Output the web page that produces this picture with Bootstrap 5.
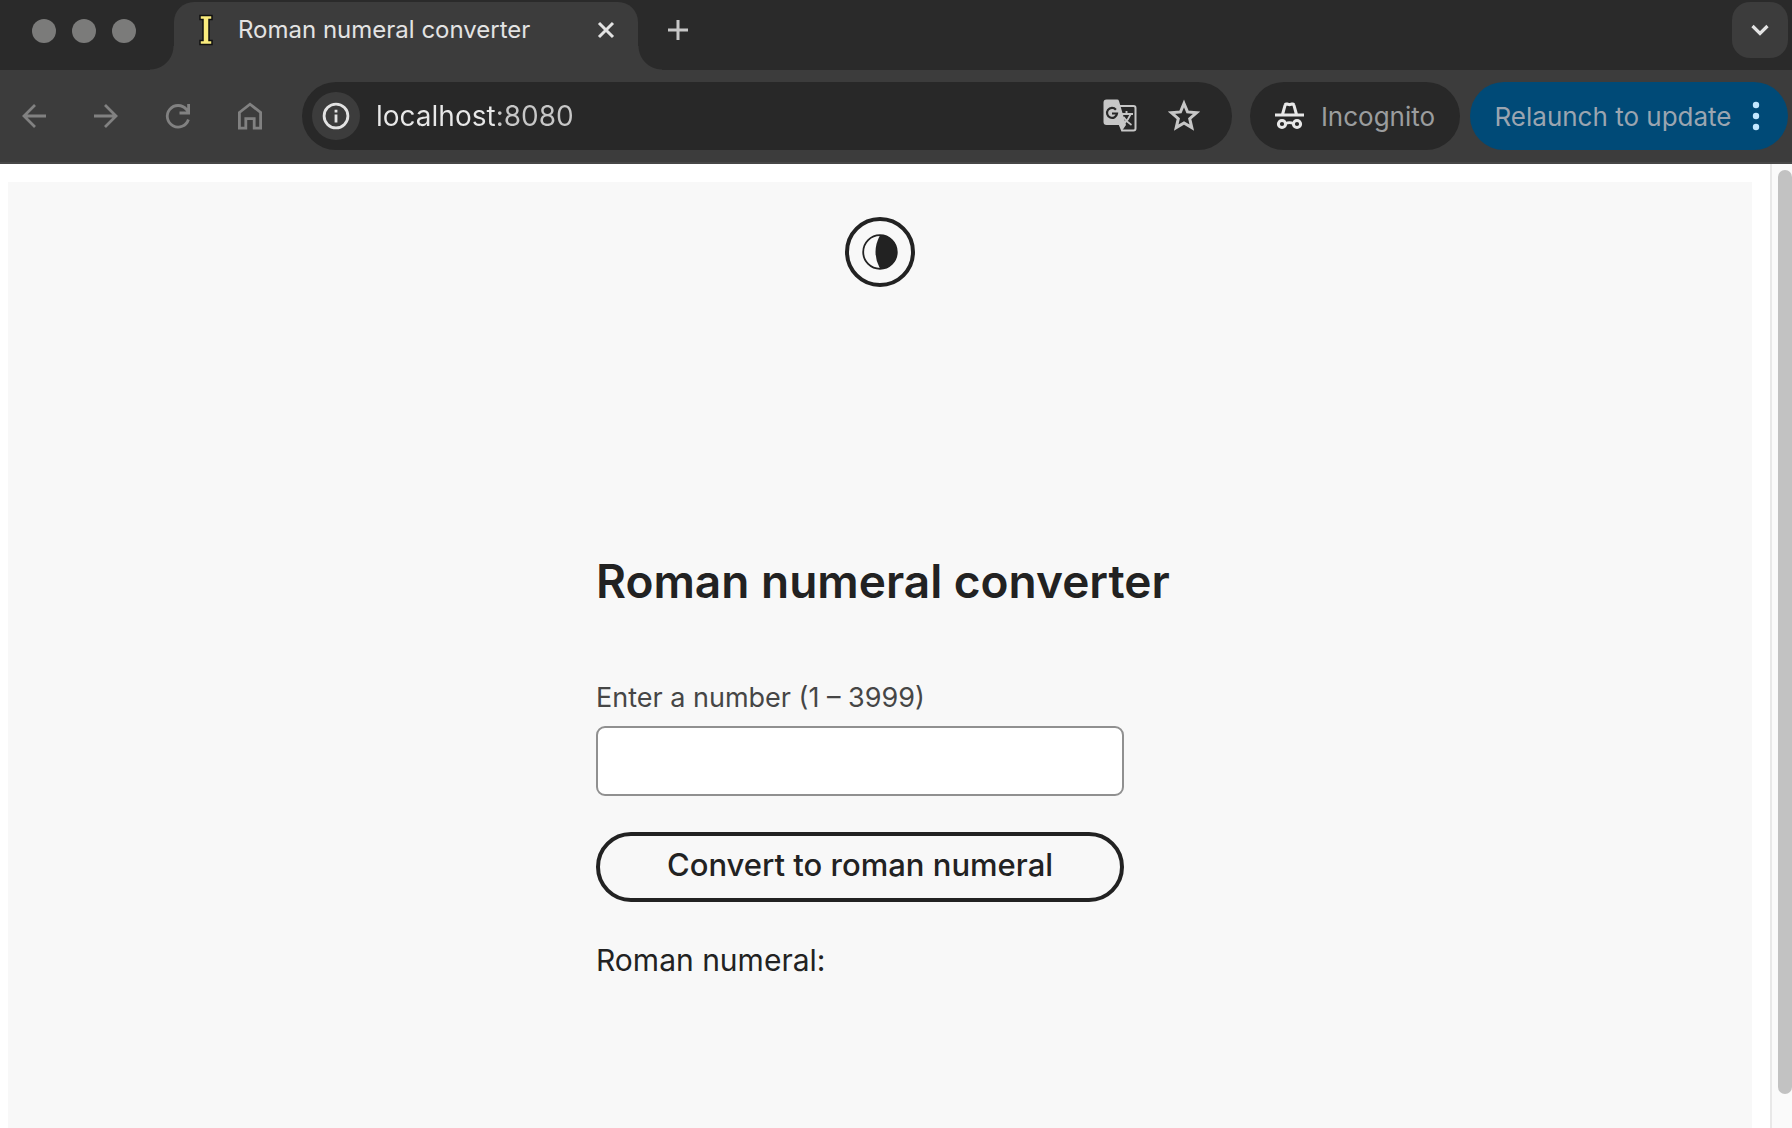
<!DOCTYPE html>
<html lang="en">
<head>
<meta charset="utf-8">
<meta name="viewport" content="width=device-width, initial-scale=1">
<title>Roman numeral converter</title>
<link href="https://cdn.jsdelivr.net/npm/bootstrap@5.3.0/dist/css/bootstrap.min.css" rel="stylesheet">
<style>
  body { font-family: Inter, "Liberation Sans", sans-serif; background: #fff; color: #222; }
  svg { display: block; flex: none; }
  .strip { background: #2a2a2a; height: 70px; padding-right: 4px; }
  .lights { padding-left: 32px; width: 174px; padding-top: 19px; gap: 16px; }
  .light { width: 24px; height: 24px; border-radius: 50%; background: #7b7b7a; }
  .tab-active { position: relative; width: 464px; height: 68px; margin-top: 2px; background: #3c3c3c; border-radius: 20px 20px 0 0; color: #e3e3e3; font-size: 24px; line-height: 32px; padding: 12px 17px 0 22px; gap: 22px; }
  .tab-active::before, .tab-active::after { content: ""; position: absolute; bottom: 0; width: 24px; height: 24px; }
  .tab-active::before { right: 100%; background: radial-gradient(circle at 0 0, transparent 23px, #3c3c3c 24px); }
  .tab-active::after { left: 100%; background: radial-gradient(circle at 100% 0, transparent 23px, #3c3c3c 24px); }
  .plain { border: 0; background: none; padding: 0; display: flex; align-items: center; justify-content: center; }
  .new-tab { width: 32px; height: 32px; margin: 14px 0 0 24px; color: #c7c7c7; }
  .tab-search { width: 56px; height: 56px; margin-top: 2px; border-radius: 18px; background: #3c3c3c; color: #e3e3e3; }
  .toolbar { background: #3c3c3c; height: 94px; border-bottom: 2px solid #474747; padding: 0 4px 0 10px; }
  .nav-btn { width: 48px; height: 48px; color: #818181; }
  .omnibox { height: 68px; margin: 0 18px 0 28px; border-radius: 34px; background: #282828; padding: 0 30px 0 10px; }
  .site-info { width: 48px; height: 48px; border-radius: 50%; background: #3c3c3c; color: #e3e3e3; }
  .address { min-width: 0; border: 0; outline: 0; padding: 0; margin-left: 16px; font-size: 28px; line-height: 40px; color: transparent; background: linear-gradient(90deg, #e8e8e8 120px, #c7c7c7 120px); -webkit-background-clip: text; background-clip: text; }
  .omni-icon { width: 36px; height: 36px; color: #c7c7c7; }
  .pill { height: 68px; border-radius: 34px; font-size: 26px; line-height: 32px; white-space: nowrap; }
  .pill span { padding-top: 2px; }
  .incognito { width: 210px; background: #282828; color: #9b9d9e; margin-right: 10px; gap: 17px; }
  .relaunch { width: 318px; background: #004a77; color: #9ba5b0; padding-right: 4px; gap: 20px; }
  .panel { background: #f8f8f8; margin: 18px 18px 0 8px; padding-top: 35px; }
  .theme-toggle { width: 70px; height: 70px; border: 4px solid #222; border-radius: 50%; }
  .converter { width: 568px; max-width: 100%; margin-top: 266px; }
  .converter h1 { font-size: 46px; line-height: 56px; font-weight: 600; margin: 0 0 73px; white-space: nowrap; }
  .converter label { font-size: 27px; line-height: 32px; color: #464646; margin-bottom: 12px; }
  .number-box, .convert-btn { width: 528px; max-width: 100%; height: 70px; }
  .number-box { border: 2px solid #909090; border-radius: 9px; background: #fff; font-size: 30px; padding: 0 16px; }
  .convert-btn { border: 4px solid #222; border-radius: 35px; background: transparent; color: #222; font-size: 31px; line-height: 36px; font-weight: 500; margin-top: 36px; padding: 0 0 4px; }
  .result { font-size: 30px; line-height: 36px; margin: 40px 0 0; }
  .scroll-track { width: 22px; border-left: 2px solid #e8e8e8; background: #fafafa; padding: 6px 0 34px 6px; }
  .scroll-thumb { background: #c2c2c2; border-radius: 8px; height: 100%; }
</style>
<script src="https://cdn.jsdelivr.net/npm/bootstrap@5.3.0/dist/js/bootstrap.bundle.min.js"></script>
</head>
<body>
<div class="vh-100 d-flex flex-column overflow-hidden">
  <header>
    <div class="strip d-flex align-items-start">
      <div class="lights d-flex"><span class="light"></span><span class="light"></span><span class="light"></span></div>
      <div class="tab-active d-flex align-items-start">
        <svg width="20" height="32" viewBox="0 0 20 32"><path d="M4 1.500h12v4h-3v21h3v4H4v-4h3v-21H4z" fill="#faec7d" stroke="#111" stroke-width="1.500"/></svg>
        <span class="flex-grow-1 text-truncate">Roman numeral converter</span>
        <button class="plain" aria-label="Close tab"><svg width="30" height="32" viewBox="0 0 30 32"><path d="M8 9l14 14M22 9L8 23" stroke="#e3e3e3" stroke-width="3"/></svg></button>
      </div>
      <button class="plain new-tab" aria-label="New tab"><svg width="32" height="32" viewBox="0 0 32 32"><path d="M16 6v20M6 16h20" stroke="currentColor" stroke-width="3"/></svg></button>
      <button class="plain tab-search ms-auto" aria-label="Search tabs"><svg width="24" height="24" viewBox="0 0 24 24"><path d="M4.500 8l7.500 7.500L19.500 8" fill="none" stroke="currentColor" stroke-width="3.200"/></svg></button>
    </div>
    <div class="toolbar d-flex align-items-center">
      <nav class="d-flex gap-4" aria-label="Browser">
        <button class="plain nav-btn" aria-label="Back"><svg width="28" height="28" viewBox="0 0 28 28" fill="none" stroke="currentColor" stroke-width="2.800"><path d="M26 14H4M15 3L4 14l11 11"/></svg></button>
        <button class="plain nav-btn" aria-label="Forward"><svg width="28" height="28" viewBox="0 0 28 28" fill="none" stroke="currentColor" stroke-width="2.800"><path d="M2 14h22M13 3l11 11-11 11"/></svg></button>
        <button class="plain nav-btn" aria-label="Reload"><svg width="28" height="28" viewBox="0 0 28 28" fill="none" stroke="currentColor" stroke-width="2.800"><path d="M24.400 17.500A10.800 10.800 0 1 1 22.500 7.500L24.500 10M24.600 2v9H15.500"/></svg></button>
        <button class="plain nav-btn" aria-label="Home"><svg width="28" height="30" viewBox="0 0 28 30" fill="none" stroke="currentColor" stroke-width="2.800"><path d="M3.400 11.500L14 3.200l10.600 8.300v15.600h-6.400v-9.400H9.800v9.400H3.400z"/></svg></button>
      </nav>
      <div class="omnibox d-flex align-items-center flex-grow-1">
        <button class="plain site-info" aria-label="Site information"><svg width="28" height="28" viewBox="0 0 28 28" fill="none" stroke="currentColor" stroke-width="2.800"><circle cx="14" cy="14" r="11.900"/><path d="M14 12.500v8M14 7.800v2.800"/></svg></button>
        <input class="address flex-grow-1" type="text" value="localhost:8080" aria-label="Address">
        <button class="plain omni-icon me-4" aria-label="Translate"><svg width="36" height="36" viewBox="0 0 36 36">
          <path d="M17 8h14.500a2 2 0 0 1 2 2v20.500a2 2 0 0 1-2 2H19.500" fill="none" stroke="currentColor" stroke-width="2"/>
          <path d="M4.500 1.500h10.500a2 2 0 0 1 2 1.400L24 27l-4.500 6.500-2.700-6.500H4.500a3 3 0 0 1-3-3V4.500a3 3 0 0 1 3-3z" fill="currentColor"/>
          <path d="M13.900 11.700A5 5 0 1 0 15 15.500h-5" fill="none" stroke="#282828" stroke-width="2.200"/>
          <path d="M19 16h12M24.500 13v3M28.500 16.500c-1.500 4-4 7-7 9.500M21.500 19c2 3 4.500 6 8 8" fill="none" stroke="currentColor" stroke-width="1.900"/>
        </svg></button>
        <button class="plain omni-icon ms-1" aria-label="Bookmark this page"><svg width="36" height="36" viewBox="0 0 36 36"><path d="M18 5.500l3.500 8.400 9.100.8-6.900 6 2.100 8.900-7.800-4.700-7.800 4.700 2.100-8.900-6.900-6 9.100-.8z" fill="none" stroke="currentColor" stroke-width="3"/></svg></button>
      </div>
      <div class="pill incognito d-flex align-items-center justify-content-center">
        <svg width="29" height="30" viewBox="0 0 29 30" fill="none" stroke="#e8e8e8" stroke-width="3"><path d="M0 14h29M7.500 13.500l2.600-9.400q.4-1.600 1.900-1.100l2.500.8 2.500-.8q1.500-.5 1.900 1.100l2.600 9.400"/><circle cx="7" cy="23" r="3.600"/><circle cx="22" cy="23" r="3.600"/><path d="M10.500 22.600q4-2 8 0" stroke-width="2.600"/></svg>
        <span>Incognito</span>
      </div>
      <button class="plain pill relaunch">
        <span>Relaunch to update</span>
        <svg width="8" height="30" viewBox="0 0 8 30" fill="#c2e7ff"><circle cx="4" cy="4" r="3.200"/><circle cx="4" cy="15" r="3.200"/><circle cx="4" cy="26" r="3.200"/></svg>
      </button>
    </div>
  </header>
  <div class="d-flex flex-grow-1">
    <main class="panel flex-grow-1 d-flex flex-column align-items-center">
      <button class="plain theme-toggle" aria-label="Toggle colour theme"><svg width="36" height="36" viewBox="0 0 36 36"><circle cx="18" cy="18" r="16.800" fill="none" stroke="#222" stroke-width="1.800"/><path d="M18 1.200a16.800 16.800 0 0 1 0 33.600Q13.500 26.500 13.500 18T18 1.200z" fill="#222"/></svg></button>
      <form class="converter d-flex flex-column align-items-start">
        <h1>Roman numeral converter</h1>
        <label for="number">Enter a number (1 – 3999)</label>
        <input id="number" class="number-box" type="text" inputmode="numeric">
        <button class="convert-btn" type="button">Convert to roman numeral</button>
        <p class="result">Roman numeral:</p>
      </form>
    </main>
    <div class="scroll-track"><div class="scroll-thumb"></div></div>
  </div>
</div>
</body>
</html>
